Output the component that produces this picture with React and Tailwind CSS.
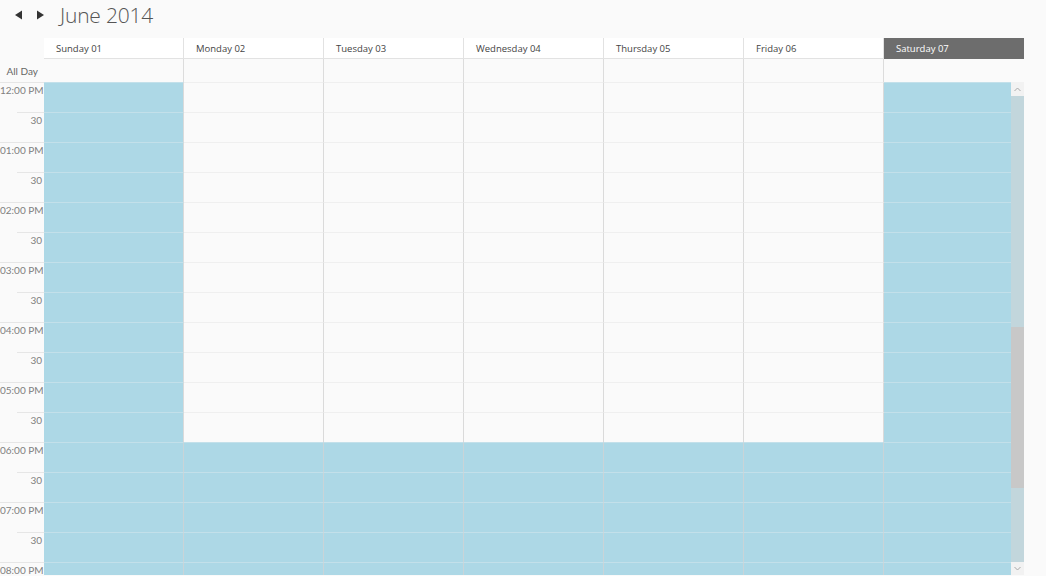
import React from "react";

const days = ["Sunday 01", "Monday 02", "Tuesday 03", "Wednesday 04", "Thursday 05", "Friday 06", "Saturday 07"];
const labels = ["12:00 PM", "30", "01:00 PM", "30", "02:00 PM", "30", "03:00 PM", "30", "04:00 PM", "30", "05:00 PM", "30", "06:00 PM", "30", "07:00 PM", "30", "08:00 PM"];

export default function App() {
  return (
    <div className="w-[1046px] h-[576px] bg-[#fafafa] overflow-hidden flex flex-col" style={{ fontFamily: '"Open Sans", "Noto Sans", sans-serif' }}>
      {/* title bar */}
      <div className="h-[38px] flex items-center shrink-0">
        <svg width="60" height="20" viewBox="0 0 60 20" className="shrink-0 -mt-[8px]">
          <polygon points="15,10 22,5.5 22,14.5" fill="#333" />
          <polygon points="44,10 37,5.5 37,14.5" fill="#333" />
        </svg>
        <span className="text-[21px] font-light text-[#555] leading-none -mt-[8px] tracking-[-0.2px]">June 2014</span>
      </div>
      {/* header */}
      <div className="h-[21px] flex shrink-0">
        <div className="w-[44px] shrink-0" />
        {days.map((d, i) => (
          <div
            key={d}
            className={
              "w-[140px] shrink-0 flex items-center pl-[12px] pt-[2px] text-[9.5px] border-b whitespace-nowrap " +
              (i === 6 ? "bg-[#6d6d6d] text-white border-[#6d6d6d]" : "bg-white text-[#444] border-r border-[#e2e2e2]")
            }
          >
            {d}
          </div>
        ))}
      </div>
      {/* all day */}
      <div className="h-[23px] flex shrink-0">
        <div className="w-[44px] shrink-0 flex items-center justify-end pr-[6px] pt-[2px] text-[10px] text-[#666] whitespace-nowrap" style={{ fontFamily: 'Lato, "Open Sans", sans-serif' }}>All Day</div>
        {days.map((d, i) => (
          <div key={d} className={"w-[140px] shrink-0 bg-[#fafafa] " + (i < 6 ? "border-r border-[#dcdcdc]" : "")} />
        ))}
      </div>
      {/* grid */}
      <div className="relative h-[493px] overflow-hidden flex shrink-0">
        <div className="w-[44px] shrink-0 flex flex-col" style={{ fontFamily: 'Lato, "Open Sans", sans-serif' }}>
          {labels.map((l, i) => (
            <div key={i} className="h-[30px] shrink-0 relative">
              <div className={"border-t border-[#e6e6e6] " + (i % 2 === 1 ? "ml-[17px]" : "")} />
              <div className="text-right pr-[2px] text-[10px] leading-[14px] text-[#808080] whitespace-nowrap">{l}</div>
            </div>
          ))}
        </div>
        {days.map((d, di) => (
          <div key={d} className="w-[140px] shrink-0 flex flex-col">
            {labels.map((l, i) => {
              const blue = di === 0 || di === 6 || i >= 12;
              const border = di < 6 ? (blue && !(di === 0 && i < 12) ? " border-r border-[#c9d4d8]" : " border-r border-[#dadada]") : "";
              return (
                <div
                  key={i}
                  className={
                    "h-[30px] shrink-0 border-t " +
                    (blue ? "bg-[#add8e6] border-t-[#c3e0ea]" : "bg-[#fafafa] border-t-[#efefef]") +
                    border
                  }
                />
              );
            })}
          </div>
        ))}
        {/* scrollbar overlay */}
        <div className="absolute left-[1011px] top-0 w-[13px] h-[493px] bg-[#c2d6dc] flex flex-col">
          <div className="h-[14px] bg-[#f2f2f2] flex items-center justify-center shrink-0">
            <svg width="7" height="5" viewBox="0 0 7 5">
              <polyline points="0.5,4 3.5,1 6.5,4" fill="none" stroke="#a8a8a8" strokeWidth="1" />
            </svg>
          </div>
          <div className="h-[231px] shrink-0" />
          <div className="h-[161px] bg-[#c8c8c8] shrink-0" />
          <div className="flex-1" />
          <div className="h-[13px] bg-[#f2f2f2] flex items-center justify-center shrink-0">
            <svg width="7" height="5" viewBox="0 0 7 5">
              <polyline points="0.5,1 3.5,4 6.5,1" fill="none" stroke="#a8a8a8" strokeWidth="1" />
            </svg>
          </div>
        </div>
      </div>
    </div>
  );
}
